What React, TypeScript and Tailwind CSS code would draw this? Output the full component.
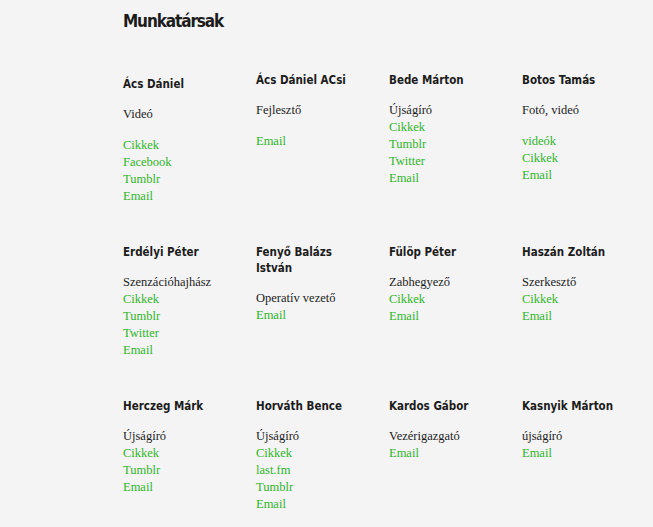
const people = [
  { name: 'Ács Dániel', role: 'Videó', gap: true, links: ['Cikkek', 'Facebook', 'Tumblr', 'Email'], shift: true },
  { name: 'Ács Dániel ACsi', role: 'Fejlesztő', gap: true, links: ['Email'] },
  { name: 'Bede Márton', role: 'Újságíró', links: ['Cikkek', 'Tumblr', 'Twitter', 'Email'] },
  { name: 'Botos Tamás', role: 'Fotó, videó', gap: true, links: ['videók', 'Cikkek', 'Email'] },
  { name: 'Erdélyi Péter', role: 'Szenzációhajhász', links: ['Cikkek', 'Tumblr', 'Twitter', 'Email'] },
  { name: 'Fenyő Balázs István', role: 'Operatív vezető', links: ['Email'] },
  { name: 'Fülöp Péter', role: 'Zabhegyező', links: ['Cikkek', 'Email'] },
  { name: 'Haszán Zoltán', role: 'Szerkesztő', links: ['Cikkek', 'Email'] },
  { name: 'Herczeg Márk', role: 'Újságíró', links: ['Cikkek', 'Tumblr', 'Email'] },
  { name: 'Horváth Bence', role: 'Újságíró', links: ['Cikkek', 'last.fm', 'Tumblr', 'Email'] },
  { name: 'Kardos Gábor', role: 'Vezérigazgató', links: ['Email'] },
  { name: 'Kasnyik Márton', role: 'újságíró', links: ['Email'] },
]

type Person = (typeof people)[number]

function Card({ person }: { person: Person }) {
  return (
    <div className={person.shift ? 'mt-1' : ''}>
      <h3 className="max-w-[108px] font-['DejaVu_Sans',sans-serif] [font-stretch:condensed] font-bold text-[11.5px] leading-[16px] text-[#1c1c1c]">
        {person.name}
      </h3>
      <div className="mt-[14px] font-['Liberation_Serif',serif] text-[12.5px] leading-[17px]">
        <p className="text-[#1c1c1c]">{person.role}</p>
        {person.gap && <div className="h-[14px]" />}
        {person.links.map((link) => (
          <a key={link} href="#" className="block text-[#30b42a]">
            {link}
          </a>
        ))}
      </div>
    </div>
  )
}

export default function App() {
  return (
    <div className="min-h-[527px] bg-[#f4f4f4] pl-[123px] pt-[9px]">
      <h1 className="font-['DejaVu_Sans',sans-serif] [font-stretch:condensed] font-bold text-[17px] leading-[24px] tracking-[-1.1px] text-[#1c1c1c]">
        Munkatársak
      </h1>
      <div className="mt-[39px] grid grid-cols-[repeat(4,133px)] items-start gap-y-[39px]">
        {people.map((p) => (
          <Card key={p.name} person={p} />
        ))}
      </div>
    </div>
  )
}
